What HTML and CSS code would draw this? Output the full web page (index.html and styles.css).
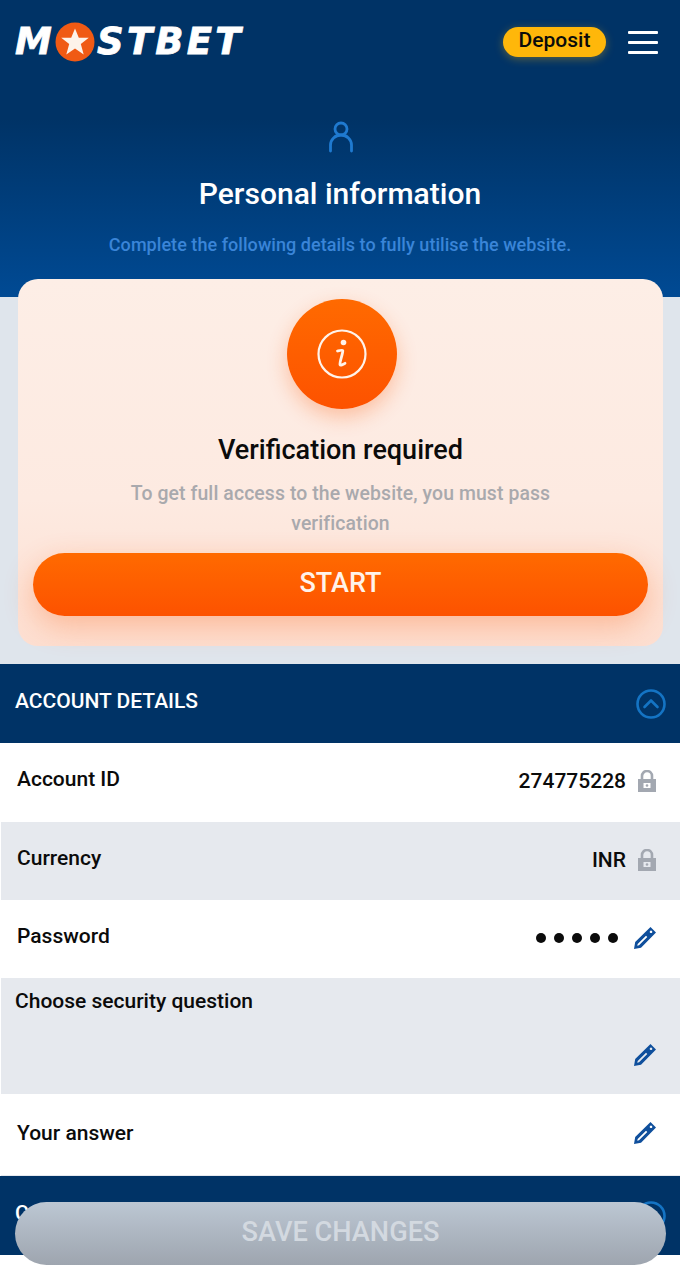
FILE: index.html
```html
<!DOCTYPE html>
<html lang="en">
<head>
  <meta charset="UTF-8">
  <title>Personal information</title>
  <link rel="stylesheet" href="styles.css">
</head>
<body>

<header class="hero">
  <div class="topbar">
    <div class="logo">
      <span>M</span>
      <svg class="logo-star" width="40" height="40" viewBox="0 0 40 40">
        <circle cx="20" cy="20" r="19.500" fill="#f05a14"/>
        <path d="M20 6.500l3.800 9.300h10l-8 6.300 2.900 10.400L20 26.600l-8.700 5.900 2.900-10.400-8-6.300h10z" fill="#fdf3ea"/>
      </svg>
      <span>STBET</span>
    </div>
    <div class="topbar-right">
      <button class="deposit">Deposit</button>
      <div class="burger"><i></i><i></i><i></i></div>
    </div>
  </div>
  <svg class="user-icon" width="26" height="32" viewBox="0 0 26 32" fill="none" stroke="#1f7ad0" stroke-width="2.800">
    <circle cx="13" cy="8" r="6"/>
    <path d="M2.500 30V24a10.500 10 0 0 1 21 0v6" stroke-linecap="round"/>
  </svg>
  <h1>Personal information</h1>
  <p class="hero-note">Complete the following details to fully utilise the website.</p>
</header>

<section class="verify-wrap">
  <div class="verify-card">
    <div class="verify-badge">
      <svg width="50" height="50" viewBox="0 0 50 50" fill="none" stroke="#fff3ea">
        <circle cx="25" cy="25" r="23.500" stroke-width="2.200"/>
        <circle cx="26.500" cy="13.500" r="2.800" fill="#fff3ea" stroke="none"/>
        <path d="M20.500 22c2.500-.6 5-1.300 5.300-.4.500 1.500-3.600 12.400-2.800 14.100.5 1 3-.1 5-1.400" stroke-width="2.800" stroke-linecap="round"/>
      </svg>
    </div>
    <h2>Verification required</h2>
    <p>To get full access to the website, you must pass verification</p>
    <button class="start">START</button>
  </div>
</section>

<div class="section-head">
  <span class="section-title">ACCOUNT DETAILS</span>
  <svg width="30" height="30" viewBox="0 0 30 30" fill="none" stroke="#1474c4" stroke-width="2.600">
    <circle cx="15" cy="15" r="13.500"/>
    <path d="M8.500 18l6.500-6.500 6.500 6.500" stroke-linecap="round" stroke-linejoin="round"/>
  </svg>
</div>

<div class="row row-first">
  <span class="row-label">Account ID</span>
  <div class="row-value">
    <span>274775228</span>
    <svg class="lock" width="18" height="22" viewBox="0 0 18 22">
      <path d="M4 10V6a5 5 0 0 1 10 0v4" fill="none" stroke="#a3a8b1" stroke-width="2.600"/>
      <path fill-rule="evenodd" d="M0 9h18v13H0zM5.500 13v5h7v-5z" fill="#a3a8b1"/>
      <circle cx="9" cy="15.500" r="1.300" fill="#a3a8b1"/>
    </svg>
  </div>
</div>

<div class="row row-alt">
  <span class="row-label">Currency</span>
  <div class="row-value">
    <span>INR</span>
    <svg class="lock" width="18" height="22" viewBox="0 0 18 22">
      <path d="M4 10V6a5 5 0 0 1 10 0v4" fill="none" stroke="#a3a8b1" stroke-width="2.600"/>
      <path fill-rule="evenodd" d="M0 9h18v13H0zM5.500 13v5h7v-5z" fill="#a3a8b1"/>
      <circle cx="9" cy="15.500" r="1.300" fill="#a3a8b1"/>
    </svg>
  </div>
</div>

<div class="row row-password">
  <span class="row-label">Password</span>
  <div class="row-value">
    <div class="dots"><i></i><i></i><i></i><i></i><i></i></div>
    <svg class="pen" width="24" height="24" viewBox="0 0 24 24">
      <path fill-rule="evenodd" d="M17.500 1l5.500 5.500L8 21.800 1 23l1.200-7zM18 4.500a1.300 1.300 0 1 0 .01 0zM13 9.800L4.700 18l-.5 1.800 1.800-.5 8.300-8.300z" fill="#0f4f9c"/>
    </svg>
  </div>
</div>

<div class="row row-alt row-tall">
  <span class="row-label row-label-wide">Choose security question</span>
  <svg class="pen pen-end" width="24" height="24" viewBox="0 0 24 24">
    <path fill-rule="evenodd" d="M17.500 1l5.500 5.500L8 21.800 1 23l1.200-7zM18 4.500a1.300 1.300 0 1 0 .01 0zM13 9.800L4.700 18l-.5 1.800 1.800-.5 8.300-8.300z" fill="#0f4f9c"/>
  </svg>
</div>

<div class="row row-last">
  <span class="row-label">Your answer</span>
  <div class="row-value">
    <svg class="pen" width="24" height="24" viewBox="0 0 24 24">
      <path fill-rule="evenodd" d="M17.500 1l5.500 5.500L8 21.800 1 23l1.200-7zM18 4.500a1.300 1.300 0 1 0 .01 0zM13 9.800L4.700 18l-.5 1.800 1.800-.5 8.300-8.300z" fill="#0f4f9c"/>
    </svg>
  </div>
</div>

<div class="section-head">
  <span class="section-title">CONTACTS</span>
  <svg width="30" height="30" viewBox="0 0 30 30" fill="none" stroke="#1474c4" stroke-width="2.600">
    <circle cx="15" cy="15" r="13.500"/>
    <path d="M8.500 18l6.500-6.500 6.500 6.500" stroke-linecap="round" stroke-linejoin="round"/>
  </svg>
</div>

<button class="save">SAVE CHANGES</button>

</body>
</html>
```

FILE: styles.css
```css
html, body {
  height: 1280px;
  overflow: hidden;
}
body {
  margin: 0;
  position: relative;
  background: #fff;
  font-family: Roboto, "Liberation Sans", sans-serif;
  color: #0b0b0b;
}
button {
  font-family: inherit;
  border: none;
}

.hero {
  height: 297px;
  box-sizing: border-box;
  background: linear-gradient(180deg, #003366 0%, #003366 40%, #004a94 100%);
  text-align: center;
  color: #fff;
}
.topbar {
  display: flex;
  justify-content: space-between;
  align-items: center;
  height: 84px;
  padding: 0 22px 0 15px;
}
.logo {
  display: flex;
  align-items: center;
  font-family: "DejaVu Sans", "Liberation Sans", sans-serif;
  font-size: 37px;
  font-weight: 700;
  font-style: italic;
  letter-spacing: 3.200px;
  -webkit-text-stroke: .8px #fff;
  color: #fff;
  line-height: 40px;
}
.logo-star {
  margin: 0 2px 0 0;
}
.topbar-right {
  display: flex;
  align-items: center;
  gap: 22px;
}
.deposit {
  width: 103px;
  height: 30px;
  padding: 0 0 4px;
  border-radius: 15px;
  background: #ffb70a;
  box-shadow: 0 2px 8px rgba(255, 183, 10, .35);
  font-size: 21px;
  font-weight: 500;
  color: #0b0b0b;
}
.burger {
  width: 30px;
  display: flex;
  flex-direction: column;
  gap: 7px;
}
.burger i {
  height: 3px;
  background: #fff;
  border-radius: 1px;
}
.user-icon {
  display: block;
  margin: 37px auto 0;
  transform: translateX(1px);
}
.hero h1 {
  margin: 23px 0 0;
  font-size: 30px;
  line-height: 36px;
  font-weight: 500;
}
.hero-note {
  margin: 21px 0 0;
  font-size: 18px;
  line-height: 24px;
  font-weight: 500;
  letter-spacing: .05px;
  color: #3a85d8;
}

.verify-wrap {
  height: 367px;
  box-sizing: border-box;
  padding: 0 17px 0 18px;
  background: #dfe5ec;
}
.verify-card {
  position: relative;
  top: -18px;
  height: 367px;
  box-sizing: border-box;
  padding: 20px 15px 0;
  border-radius: 20px;
  background: linear-gradient(180deg, #fdeee6 0%, #fdeae1 60%, #fddfd1 100%);
  text-align: center;
}
.verify-badge {
  width: 110px;
  height: 110px;
  margin: 0 0 0 254px;
  display: flex;
  align-items: center;
  justify-content: center;
  border-radius: 50%;
  background: linear-gradient(180deg, #ff6a00 0%, #fd5200 100%);
  box-shadow: 0 8px 20px rgba(253, 90, 10, .3);
}
.verify-card h2 {
  margin: 23px 0 0;
  font-size: 27px;
  line-height: 36px;
  font-weight: 500;
  color: #0b0b0b;
}
.verify-card p {
  margin: 11px 60px 0;
  font-size: 19.400px;
  letter-spacing: .1px;
  line-height: 30px;
  font-weight: 500;
  color: #a9a9ad;
}
.start {
  display: block;
  width: 100%;
  height: 63px;
  margin-top: 14px;
  padding: 0 0 4px;
  border-radius: 32px;
  background: linear-gradient(180deg, #ff6a00 0%, #fd5200 100%);
  box-shadow: 0 10px 30px rgba(253, 90, 10, .3);
  color: #fff3ea;
  font-size: 27px;
  font-weight: 500;
}

.section-head {
  display: flex;
  justify-content: space-between;
  align-items: center;
  height: 79px;
  padding: 0 14px 0 15px;
  background: #003366;
  color: #fff;
  font-size: 21px;
  font-weight: 500;
}
.section-title {
  margin-bottom: 5px;
}
.row {
  display: flex;
  justify-content: space-between;
  align-items: flex-start;
  height: 78px;
  box-sizing: border-box;
  padding: 24px 24px 0 17px;
  margin-left: 1px;
  background: #fff;
  font-size: 21px;
  font-weight: 500;
}
.row-first {
  height: 79px;
}
.row-password .row-value {
  margin-top: 2px;
}
.row-label {
  margin-left: -1px;
  line-height: 24px;
}
.row-label-wide {
  margin-left: -3px;
}
.row-alt {
  background: #e6e9ee;
}
.row-tall {
  height: 116px;
  padding-top: 11px;
}
.row-last {
  height: 82px;
  padding-top: 27px;
  border-bottom: 1px solid #e6e9ee;
}
.row-value {
  display: flex;
  align-items: center;
  gap: 12px;
  line-height: 28px;
}
.dots {
  display: flex;
  gap: 8px;
  margin-right: 3px;
}
.dots i {
  width: 10px;
  height: 10px;
  border-radius: 50%;
  background: #0b0b0b;
}
.pen {
  margin-right: -1px;
}
.pen-end {
  align-self: flex-end;
  margin-bottom: 27px;
}

.save {
  position: absolute;
  left: 15px;
  top: 1202px;
  width: 651px;
  height: 63px;
  padding: 0 0 4px;
  border-radius: 32px;
  background: linear-gradient(180deg, #bcc7d3 0%, #9ea5af 100%);
  color: #d3d9e0;
  font-size: 27.200px;
  font-weight: 500;
}
```
